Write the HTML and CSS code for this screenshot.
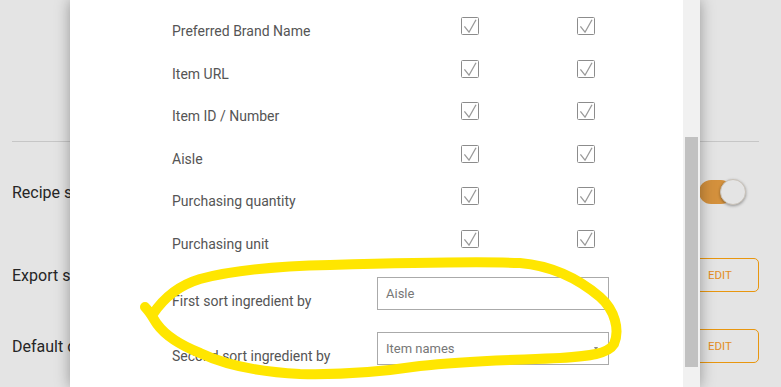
FILE: index.html
```html
<!DOCTYPE html>
<html lang="en">
<head>
<meta charset="utf-8">
<title>Shopping list settings</title>
<link rel="stylesheet" href="styles.css">
</head>
<body>
<div class="page">
  <div class="page-top"></div>
  <div class="setting setting-recipe">
    <span class="s-label">Recipe sorting</span>
    <div class="toggle"><div class="track"></div><span class="knob"></span></div>
  </div>
  <div class="setting setting-export">
    <span class="s-label">Export settings</span>
    <button class="edit">EDIT</button>
  </div>
  <div class="setting setting-default">
    <span class="s-label">Default collection</span>
    <button class="edit">EDIT</button>
  </div>
</div>

<div class="dialog">
  <div class="dialog-body">
    <div class="opt-row"><span class="opt-label">Preferred Brand Name</span><span class="cb"><svg viewBox="0 0 18 18"><rect x="0.5" y="0.5" width="17" height="17" rx="1"/><path d="M3.4 9.4 L8 15.2 L15 2.8"/></svg></span><span class="cb cb2"><svg viewBox="0 0 18 18"><rect x="0.5" y="0.5" width="17" height="17" rx="1"/><path d="M3.4 9.4 L8 15.2 L15 2.8"/></svg></span></div>
    <div class="opt-row"><span class="opt-label">Item URL</span><span class="cb"><svg viewBox="0 0 18 18"><rect x="0.5" y="0.5" width="17" height="17" rx="1"/><path d="M3.4 9.4 L8 15.2 L15 2.8"/></svg></span><span class="cb cb2"><svg viewBox="0 0 18 18"><rect x="0.5" y="0.5" width="17" height="17" rx="1"/><path d="M3.4 9.4 L8 15.2 L15 2.8"/></svg></span></div>
    <div class="opt-row"><span class="opt-label">Item ID / Number</span><span class="cb"><svg viewBox="0 0 18 18"><rect x="0.5" y="0.5" width="17" height="17" rx="1"/><path d="M3.4 9.4 L8 15.2 L15 2.8"/></svg></span><span class="cb cb2"><svg viewBox="0 0 18 18"><rect x="0.5" y="0.5" width="17" height="17" rx="1"/><path d="M3.4 9.4 L8 15.2 L15 2.8"/></svg></span></div>
    <div class="opt-row"><span class="opt-label">Aisle</span><span class="cb"><svg viewBox="0 0 18 18"><rect x="0.5" y="0.5" width="17" height="17" rx="1"/><path d="M3.4 9.4 L8 15.2 L15 2.8"/></svg></span><span class="cb cb2"><svg viewBox="0 0 18 18"><rect x="0.5" y="0.5" width="17" height="17" rx="1"/><path d="M3.4 9.4 L8 15.2 L15 2.8"/></svg></span></div>
    <div class="opt-row"><span class="opt-label">Purchasing quantity</span><span class="cb"><svg viewBox="0 0 18 18"><rect x="0.5" y="0.5" width="17" height="17" rx="1"/><path d="M3.4 9.4 L8 15.2 L15 2.8"/></svg></span><span class="cb cb2"><svg viewBox="0 0 18 18"><rect x="0.5" y="0.5" width="17" height="17" rx="1"/><path d="M3.4 9.4 L8 15.2 L15 2.8"/></svg></span></div>
    <div class="opt-row"><span class="opt-label">Purchasing unit</span><span class="cb"><svg viewBox="0 0 18 18"><rect x="0.5" y="0.5" width="17" height="17" rx="1"/><path d="M3.4 9.4 L8 15.2 L15 2.8"/></svg></span><span class="cb cb2"><svg viewBox="0 0 18 18"><rect x="0.5" y="0.5" width="17" height="17" rx="1"/><path d="M3.4 9.4 L8 15.2 L15 2.8"/></svg></span></div>

    <div class="sort-list">
      <div class="sort-row">
        <span class="sort-label">First sort ingredient by</span>
        <div class="select"><span class="select-text">Aisle</span><span class="arrow"></span></div>
      </div>
      <div class="sort-row">
        <span class="sort-label">Second sort ingredient by</span>
        <div class="select"><span class="select-text">Item names</span><span class="arrow"></span></div>
      </div>
    </div>
  </div>
  <div class="scrollbar"><div class="thumb"></div></div>
</div>

<svg class="annotation" viewBox="0 0 781 387" width="781" height="387">
  <path d="M153,314 C165,296 180,285 200,279 C230,271 280,266 330,265 C400,263 470,261 520,263 C555,266 580,280 600,297 C615,310 620,330 614,344 C608,354 590,356 560,358 C520,360 470,360 420,366 C380,372 340,375 300,374 C260,372 225,365 200,353 C180,345 165,335 157,324 C153,318 150,312 145,307"/>
</svg>
</body>
</html>
```

FILE: styles.css
```css
* { box-sizing: border-box; }

html, body {
  margin: 0;
  padding: 0;
  width: 781px;
  height: 387px;
  overflow: hidden;
}

body {
  background: #e4e4e4;
  font-family: Roboto, "Liberation Sans", sans-serif;
  position: relative;
}

/* background page */
.page {
  padding: 0 22px 0 12px;
}

.page-top {
  height: 142px;
  border-bottom: 1px solid #c6c6c6;
}

.setting {
  display: flex;
  align-items: center;
  justify-content: space-between;
}

.setting-recipe { height: 100px; }
.setting-export { height: 66px; }
.setting-default { height: 76px; }

.s-label {
  font-size: 16px;
  color: #262626;
  white-space: nowrap;
}

.toggle {
  position: relative;
  width: 47px;
  height: 26px;
  margin-right: 13px;
}

.track {
  width: 34px;
  height: 24px;
  margin-top: 1px;
  border-radius: 12px;
  background: #d4913d;
}

.knob {
  position: absolute;
  right: 0;
  top: 0;
  width: 26px;
  height: 26px;
  border-radius: 50%;
  background: #e4e4e4;
  border: 1px solid #c9c2b8;
  box-shadow: 0 1px 3px rgba(0, 0, 0, 0.35);
}

.edit {
  width: 68px;
  height: 34px;
  padding: 0 0 0 16px;
  text-align: left;
  background: transparent;
  border: 1px solid #e8960f;
  border-radius: 5px;
  color: #e38d22;
  font-family: Roboto, "Liberation Sans", sans-serif;
  font-size: 11.5px;
}

/* dialog */
.dialog {
  position: absolute;
  left: 70px;
  top: 0;
  width: 630px;
  height: 387px;
  background: #fff;
  display: flex;
  box-shadow: 0 0 14px rgba(0, 0, 0, 0.35);
}

.dialog-body {
  flex: 1;
  padding: 4px 0 0 102px;
  overflow: hidden;
}

.opt-row {
  display: flex;
  align-items: flex-start;
  height: 42.5px;
}

.opt-label {
  width: 289px;
  margin-top: 17px;
  font-size: 14px;
  line-height: 20px;
  color: #555;
  white-space: nowrap;
}

.cb {
  display: block;
  width: 18px;
  height: 18px;
  margin-top: 13px;
}

.cb2 { margin-left: 98px; }

.cb svg {
  display: block;
  width: 18px;
  height: 18px;
}

.cb rect {
  fill: #fff;
  stroke: #8c8c8c;
  stroke-width: 1;
}

.cb path {
  fill: none;
  stroke: #9a9a9a;
  stroke-width: 1.3;
  stroke-linejoin: round;
}

.sort-list {
  padding-top: 18px;
}

.sort-row {
  display: flex;
  align-items: flex-start;
  height: 55px;
}

.sort-label {
  width: 205px;
  margin-top: 14px;
  font-size: 14px;
  line-height: 20px;
  color: #555;
  white-space: nowrap;
}

.select {
  width: 232px;
  height: 33px;
  border: 1px solid #aaa;
  display: flex;
  align-items: center;
  padding: 0 10px 0 8px;
}

.select-text {
  font-size: 13px;
  color: #777;
}

.arrow {
  margin-left: auto;
  width: 0;
  height: 0;
  border-left: 2.5px solid transparent;
  border-right: 2.5px solid transparent;
  border-top: 4px solid #8a8a8a;
}

.scrollbar {
  width: 17px;
  background: #f1f1f1;
  padding: 137px 2px 0;
}

.thumb {
  height: 230px;
  background: #c1c1c1;
}

/* hand-drawn highlight */
.annotation {
  position: absolute;
  left: 0;
  top: 0;
  pointer-events: none;
}

.annotation path {
  fill: none;
  stroke: #ffe600;
  stroke-width: 10;
  stroke-linecap: round;
  stroke-linejoin: round;
}
```
